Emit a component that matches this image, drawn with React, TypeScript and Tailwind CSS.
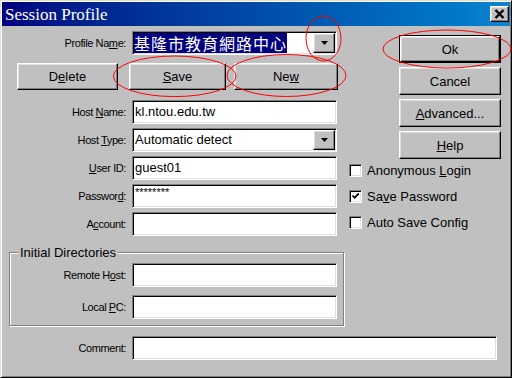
import React from "react";

const raised =
  "border border-t-white border-l-white border-r-black border-b-black shadow-[inset_-1px_-1px_0_#808080,inset_1px_1px_0_#dfdfdf] bg-[#c0c0c0]";
const sunken =
  "border border-t-[#808080] border-l-[#808080] border-r-white border-b-white shadow-[inset_1px_1px_0_#000,inset_-1px_-1px_0_#dfdfdf] bg-white";

function Btn({ children, className }: { children: React.ReactNode; className: string }) {
  return (
    <div className={raised + " flex items-center justify-center text-[13px] leading-none " + className}>
      {children}
    </div>
  );
}

function Label({ children, className }: { children: React.ReactNode; className: string }) {
  return (
    <div className={"text-right text-[11px] tracking-[-0.4px] leading-none " + className}>{children}</div>
  );
}

function DropBtn() {
  return (
    <div className={raised + " w-[22px] h-[20px] flex-none flex items-center justify-center"}>
      <svg width="7" height="4" viewBox="0 0 7 4">
        <polygon points="0,0 7,0 3.5,4" fill="#000" />
      </svg>
    </div>
  );
}

function Field({ label, value, mt }: { label: React.ReactNode; value?: React.ReactNode; mt: string }) {
  return (
    <div className={"flex items-center h-[24px] " + mt}>
      <Label className="w-[124px]">{label}</Label>
      <div className={sunken + " ml-[6px] w-[205px] h-[24px] pl-[2px] text-[13px] leading-[22px] whitespace-nowrap overflow-hidden"}>
        {value}
      </div>
    </div>
  );
}

function Check({ label, checked, mt }: { label: React.ReactNode; checked?: boolean; mt: string }) {
  return (
    <div className={"flex items-center h-[13px] " + mt}>
      <div className={sunken + " w-[13px] h-[13px] flex-none flex items-center justify-center"}>
        {checked && (
          <svg width="9" height="9" viewBox="0 0 9 9">
            <path d="M1.5 3.5 L3.5 5.8 L7.8 1.5" stroke="#000" strokeWidth="1.8" fill="none" />
          </svg>
        )}
      </div>
      <span className="ml-[5px] text-[13px] leading-[13px] whitespace-nowrap">{label}</span>
    </div>
  );
}

export default function App() {
  return (
    <div className="w-[512px] h-[378px] relative bg-[#c0c0c0] font-['Liberation_Sans',Arial,sans-serif] text-black overflow-hidden">
      <div className="w-full h-full flex flex-col border border-t-[#dfdfdf] border-l-[#dfdfdf] border-r-black border-b-black shadow-[inset_1px_1px_0_#fff,inset_-1px_-1px_0_#808080] p-[1px]">
        {/* Title bar */}
        <div className="h-[24px] flex-none flex items-center bg-linear-to-r from-[#000080] to-[#1084d0] pl-[3px] pr-[1px]">
          <span className="text-white text-[17px] leading-none font-['Liberation_Serif','Times_New_Roman',serif]">
            Session Profile
          </span>
          <div className={raised + " ml-auto w-[19px] h-[16px] flex items-center justify-center"}>
            <svg width="11" height="10" viewBox="0 0 11 10">
              <path d="M1.5 1 L9.5 9 M9.5 1 L1.5 9" stroke="#000" strokeWidth="2.4" />
            </svg>
          </div>
        </div>

        {/* Body */}
        <div className="flex-1 flex flex-col">
          <div className="flex">
            {/* Left column */}
            <div className="w-[345px] flex flex-col">
              <div className="flex items-center h-[24px] mt-[5px]">
                <Label className="w-[124px]">
                  Profile Na<u>m</u>e:
                </Label>
                <div className={sunken + " ml-[6px] w-[205px] h-[24px] p-[1px] flex"}>
                  <span className="h-[20px] bg-[#000080] text-white text-[16px] leading-[20px] tracking-[1px] font-['Noto_Sans_CJK_TC','Noto_Sans_CJK_SC',sans-serif] whitespace-nowrap">
                    基隆市教育網路中心
                  </span>
                  <div className="ml-auto">
                    <DropBtn />
                  </div>
                </div>
              </div>

              <div className="flex h-[27px] mt-[8px] pl-[15px]">
                <Btn className="w-[101px] h-[27px]">
                  D<u>e</u>lete
                </Btn>
                <Btn className="ml-[11px] w-[97px] h-[27px]">
                  <u>S</u>ave
                </Btn>
                <Btn className="ml-[8px] w-[104px] h-[27px]">
                  Ne<u>w</u>
                </Btn>
              </div>

              <Field mt="mt-[10px]" label={<>Host <u>N</u>ame:</>} value="kl.ntou.edu.tw" />

              <div className="flex items-center h-[24px] mt-[4px]">
                <Label className="w-[124px]">
                  Host <u>T</u>ype:
                </Label>
                <div className={sunken + " ml-[6px] w-[205px] h-[24px] p-[1px] flex items-center"}>
                  <span className="pl-[1px] text-[13px] leading-[20px] whitespace-nowrap">Automatic detect</span>
                  <div className="ml-auto">
                    <DropBtn />
                  </div>
                </div>
              </div>

              <Field mt="mt-[4px]" label={<><u>U</u>ser ID:</>} value="guest01" />

              <div className="flex items-center h-[24px] mt-[4px]">
                <Label className="w-[124px]">
                  Passwor<u>d</u>:
                </Label>
                <div className={sunken + " ml-[6px] w-[205px] h-[24px] pl-[2px] pt-[2px] text-[11px] leading-[11px]"}>
                  ********
                </div>
              </div>

              <Field mt="mt-[4px]" label={<>A<u>c</u>count:</>} />

              {/* Group box */}
              <div className="relative mt-[16px] ml-[7px] w-[335px] h-[74px] border border-[#808080] shadow-[inset_1px_1px_0_#fff,1px_1px_0_#fff] pt-[10px]">
                <span className="absolute left-[8px] -top-[7px] px-[2px] bg-[#c0c0c0] text-[13px] leading-[13px] whitespace-nowrap">
                  Initial Directories
                </span>
                <div className="flex items-center h-[24px]">
                  <Label className="w-[116px]">
                    Remote H<u>o</u>st:
                  </Label>
                  <div className={sunken + " ml-[6px] w-[205px] h-[24px]"} />
                </div>
                <div className="flex items-center h-[24px] mt-[8px]">
                  <Label className="w-[116px]">
                    Local <u>P</u>C:
                  </Label>
                  <div className={sunken + " ml-[6px] w-[205px] h-[24px]"} />
                </div>
              </div>
            </div>

            {/* Right column */}
            <div className="flex flex-col pl-[2px]">
              <div className="mt-[9px] ml-[50px] w-[102px] h-[28px] border border-black">
                <Btn className="w-full h-full">Ok</Btn>
              </div>
              <Btn className="mt-[4px] ml-[50px] w-[102px] h-[28px]">Cancel</Btn>
              <Btn className="mt-[4px] ml-[50px] w-[102px] h-[28px]">
                <span>
                  <u>A</u>dvanced...
                </span>
              </Btn>
              <Btn className="mt-[4px] ml-[50px] w-[102px] h-[28px]">
                <span>
                  <u>H</u>elp
                </span>
              </Btn>
              <Check mt="mt-[5px]" label={<>Anonymous <u>L</u>ogin</>} />
              <Check mt="mt-[13px]" checked label={<>Sa<u>v</u>e Password</>} />
              <Check mt="mt-[13px]" label="Auto Save Config" />
            </div>
          </div>

          <div className="flex items-center h-[24px] mt-[10px]">
            <Label className="w-[124px]">Comment:</Label>
            <div className={sunken + " ml-[6px] w-[365px] h-[24px]"} />
          </div>
        </div>
      </div>

      {/* Red annotation ellipses */}
      <svg className="absolute left-0 top-0 pointer-events-none" width="512" height="378" viewBox="0 0 512 378">
        <g fill="none" stroke="#ff0000" strokeWidth="1">
          <ellipse cx="323.5" cy="38.5" rx="17.5" ry="22.5" />
          <ellipse cx="174.7" cy="76.3" rx="61.3" ry="20.3" />
          <ellipse cx="286.5" cy="75.5" rx="59.5" ry="21" />
          <ellipse cx="447" cy="49" rx="64" ry="19" />
        </g>
      </svg>
    </div>
  );
}
